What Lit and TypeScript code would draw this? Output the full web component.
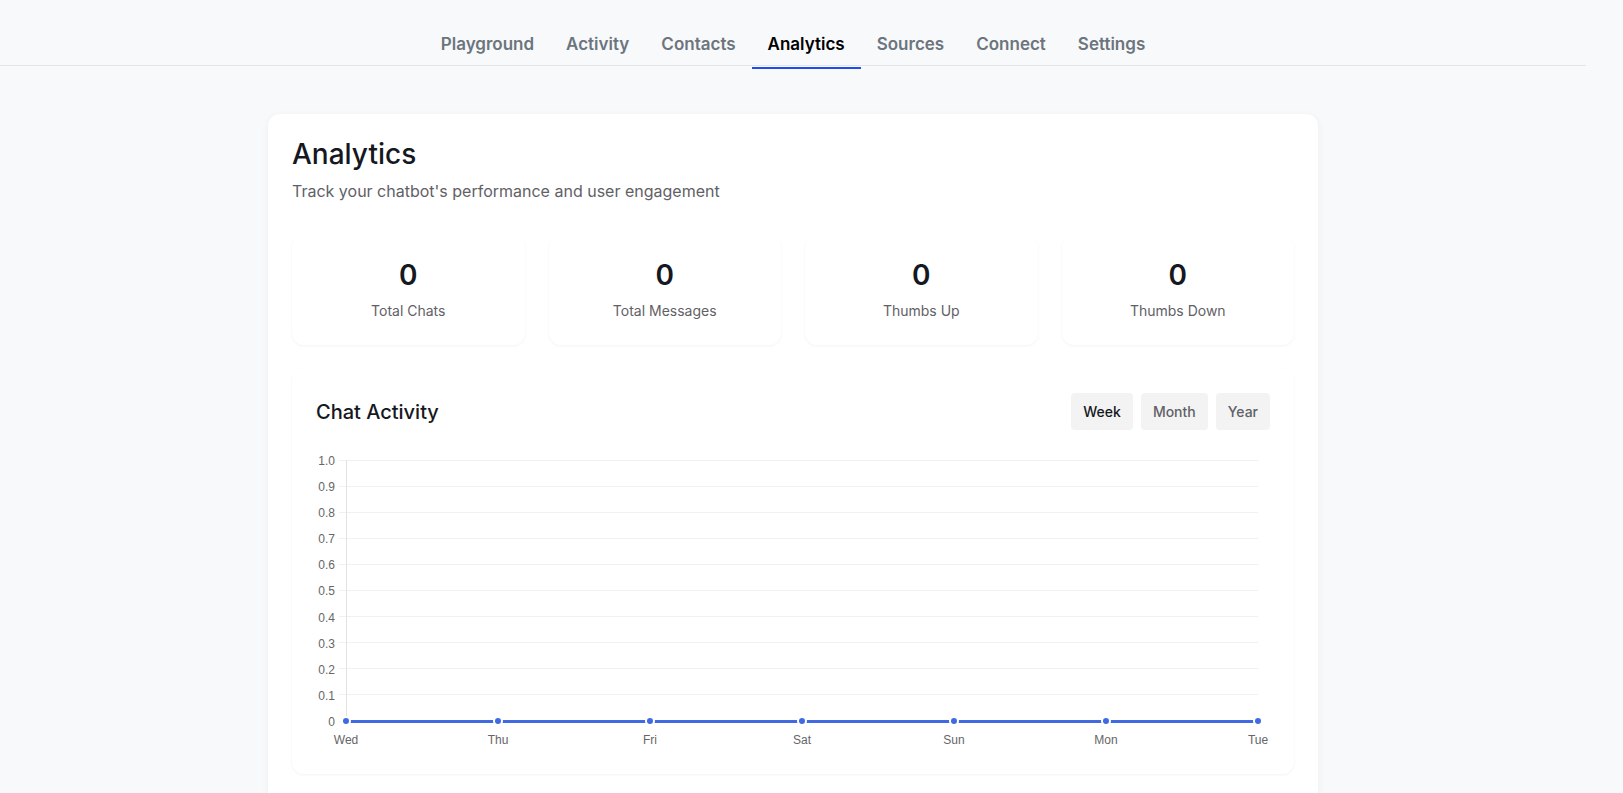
import { LitElement, html, svg, css } from "lit";
import { customElement, state } from "lit/decorators.js";
import { classMap } from "lit/directives/class-map.js";

const TABS = ["Playground", "Activity", "Contacts", "Analytics", "Sources", "Connect", "Settings"];
const STATS = [
  { label: "Total Chats", value: 0 },
  { label: "Total Messages", value: 0 },
  { label: "Thumbs Up", value: 0 },
  { label: "Thumbs Down", value: 0 },
];
const RANGES = ["Week", "Month", "Year"];
const TICKS = ["1.0", "0.9", "0.8", "0.7", "0.6", "0.5", "0.4", "0.3", "0.2", "0.1", "0"];
const POINTS = [
  { day: "Wed", value: 0 },
  { day: "Thu", value: 0 },
  { day: "Fri", value: 0 },
  { day: "Sat", value: 0 },
  { day: "Sun", value: 0 },
  { day: "Mon", value: 0 },
  { day: "Tue", value: 0 },
];

@customElement("activity-chart")
export class ActivityChart extends LitElement {
  static styles = css`
    :host {
      display: flex;
      gap: 11px;
      padding: 12px 12px 29px 0;
      font: 12px/12px "Liberation Sans", Arial, sans-serif;
      color: #666;
    }
    .scale {
      display: flex;
      flex-direction: column;
      justify-content: space-between;
      width: 19px;
      height: 273px;
      margin: -5px 0 -7px;
      text-align: right;
    }
    .plot {
      flex: 1;
      min-width: 0;
      height: 261px;
      overflow: visible;
    }
    .grid {
      stroke: #f1f1f1;
    }
    .axis {
      stroke: #e2e2e2;
    }
    .grid,
    .axis,
    .series {
      shape-rendering: crispEdges;
    }
    .series {
      stroke: #4169e1;
      stroke-width: 3;
    }
    .dot {
      fill: #4169e1;
      stroke: #fff;
      stroke-width: 2;
    }
    .day {
      fill: #666;
      text-anchor: middle;
    }
  `;

  render() {
    const x = (i: number) => `${(i * 100) / (POINTS.length - 1)}%`;
    const y = (v: number) => `${(1 - v) * 100}%`;
    const steps = TICKS.length - 1;
    return html`
      <div class="scale">${TICKS.map((t) => html`<span>${t}</span>`)}</div>
      <svg class="plot" role="img" aria-label="Chat Activity">
        ${TICKS.map((_, i) => {
          const at = `${(i * 100) / steps}%`;
          return svg`<line class="grid" x1="-7" x2="100%" y1=${at} y2=${at}></line>`;
        })}
        <line class="axis" x1="0" x2="0" y1="0" y2="100%"></line>
        ${POINTS.slice(1).map(
          (p, i) => svg`<line class="series" x1=${x(i)} x2=${x(i + 1)} y1=${y(POINTS[i].value)} y2=${y(p.value)}></line>`
        )}
        ${POINTS.map(
          (p, i) => svg`
            <circle class="dot" cx=${x(i)} cy=${y(p.value)} r="4"></circle>
            <text class="day" x=${x(i)} y="100%" dy="23">${p.day}</text>`
        )}
      </svg>
    `;
  }
}

@customElement("app-root")
export class AppRoot extends LitElement {
  static styles = css`
    :host {
      display: block;
      box-sizing: border-box;
      min-height: 100vh;
      padding-right: 37px;
      background: #f8f9fb;
      color: #15181e;
      font-family: Inter, sans-serif;
      font-size: 16px;
      line-height: 24px;
    }
    .tabs {
      display: flex;
      justify-content: center;
      height: 65px;
      border-bottom: 1px solid #e2e6ea;
    }
    .tab {
      box-sizing: border-box;
      height: 69px;
      padding: 32px 16px 0;
      color: #6c757d;
      font-size: 17px;
      font-weight: 600;
      text-decoration: none;
    }
    .tab.current {
      color: #000;
      border-bottom: 2px solid #1d4fe8;
    }
    .panel {
      box-sizing: border-box;
      max-width: 1050px;
      margin: 48px auto 0;
      padding: 24px 24px 48px;
      background: #fff;
      border-radius: 12px;
      box-shadow: 0 2px 8px rgba(0, 0, 0, 0.05);
    }
    .title {
      margin: 0;
      font-size: 28px;
      line-height: 33px;
      font-weight: 500;
    }
    .intro {
      margin: 8px 0 32px;
      color: #5f6166;
    }
    .stats {
      display: grid;
      grid-template-columns: repeat(4, 1fr);
      gap: 24px;
      margin-bottom: 24px;
    }
    .card {
      padding: 24px;
      border-radius: 12px;
      box-shadow: 0 1px 3px rgba(0, 0, 0, 0.05);
    }
    .stat {
      text-align: center;
    }
    .value {
      margin: 0;
      font-size: 28px;
      line-height: 32px;
      font-weight: 600;
    }
    .label {
      margin: 10px 0 0;
      color: #5f6166;
      font-size: 14px;
      line-height: 20px;
    }
    .head {
      display: flex;
      justify-content: space-between;
      align-items: center;
      margin-bottom: 18px;
    }
    .subtitle {
      margin: 0;
      font-size: 20px;
      line-height: 28px;
      font-weight: 500;
    }
    .ranges {
      display: flex;
      gap: 8px;
    }
    .range {
      padding: 8px 12px;
      border: 0;
      border-radius: 4px;
      background: #f3f3f3;
      color: #5f6166;
      font: 500 14px/21px Inter, sans-serif;
      cursor: pointer;
    }
    .range.current {
      color: #15181e;
    }
  `;

  @state() private range = "Week";

  render() {
    return html`
      <nav class="tabs">
        ${TABS.map(
          (t) => html`<a href="#" class=${classMap({ tab: true, current: t === "Analytics" })}>${t}</a>`
        )}
      </nav>
      <main class="panel">
        <h1 class="title">Analytics</h1>
        <p class="intro">Track your chatbot's performance and user engagement</p>
        <section class="stats">
          ${STATS.map(
            (s) => html`<div class="card stat">
              <p class="value">${s.value}</p>
              <p class="label">${s.label}</p>
            </div>`
          )}
        </section>
        <section class="card">
          <div class="head">
            <h2 class="subtitle">Chat Activity</h2>
            <div class="ranges">
              ${RANGES.map(
                (r) => html`<button
                  type="button"
                  class=${classMap({ range: true, current: r === this.range })}
                  @click=${() => (this.range = r)}
                >${r}</button>`
              )}
            </div>
          </div>
          <activity-chart></activity-chart>
        </section>
      </main>
    `;
  }
}
